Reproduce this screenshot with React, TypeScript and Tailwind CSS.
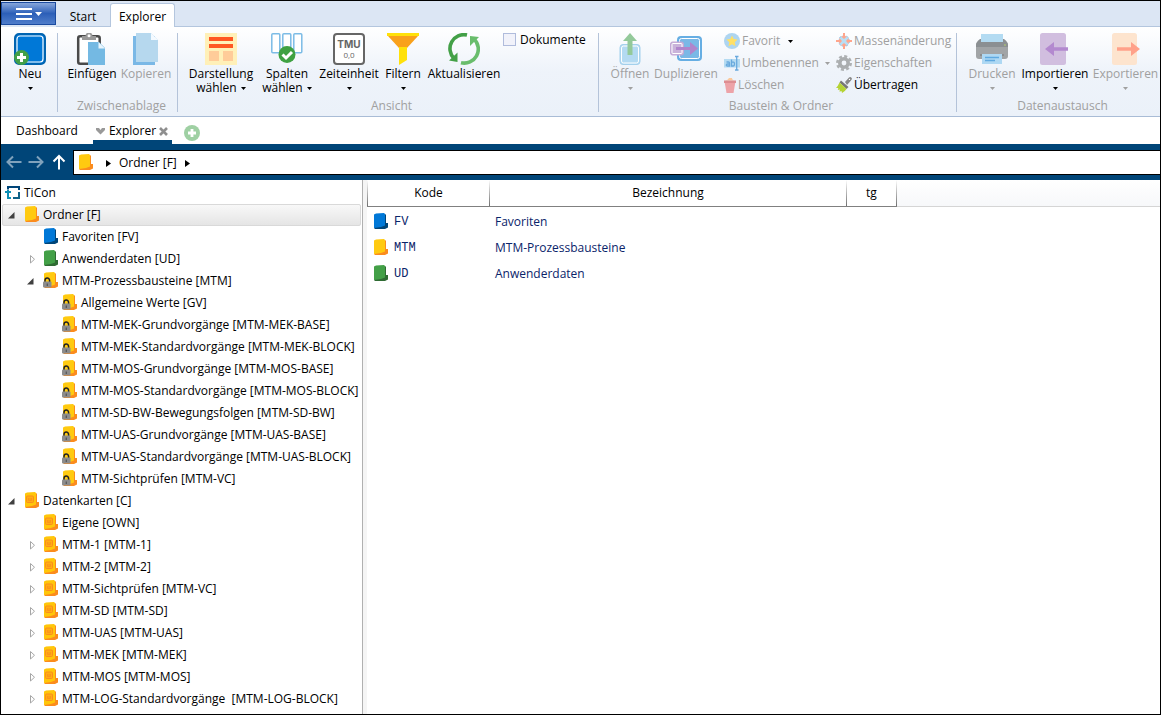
import { useState, type ReactNode } from "react";
import clsx from "clsx";

type FolderKind = "blue" | "green" | "yellow" | "locked" | "card";

type TreeNode = {
  label: string;
  icon: FolderKind;
  open?: boolean;
  expandable?: boolean;
  children?: TreeNode[];
};

const treeData: TreeNode[] = [
  {
    label: "Ordner [F]",
    icon: "yellow",
    open: true,
    expandable: true,
    children: [
      { label: "Favoriten [FV]", icon: "blue" },
      { label: "Anwenderdaten [UD]", icon: "green", expandable: true },
      {
        label: "MTM-Prozessbausteine [MTM]",
        icon: "locked",
        open: true,
        expandable: true,
        children: [
          { label: "Allgemeine Werte [GV]", icon: "locked" },
          { label: "MTM-MEK-Grundvorgänge [MTM-MEK-BASE]", icon: "locked" },
          { label: "MTM-MEK-Standardvorgänge [MTM-MEK-BLOCK]", icon: "locked" },
          { label: "MTM-MOS-Grundvorgänge [MTM-MOS-BASE]", icon: "locked" },
          { label: "MTM-MOS-Standardvorgänge [MTM-MOS-BLOCK]", icon: "locked" },
          { label: "MTM-SD-BW-Bewegungsfolgen [MTM-SD-BW]", icon: "locked" },
          { label: "MTM-UAS-Grundvorgänge [MTM-UAS-BASE]", icon: "locked" },
          { label: "MTM-UAS-Standardvorgänge [MTM-UAS-BLOCK]", icon: "locked" },
          { label: "MTM-Sichtprüfen [MTM-VC]", icon: "locked" },
        ],
      },
    ],
  },
  {
    label: "Datenkarten [C]",
    icon: "card",
    open: true,
    expandable: true,
    children: [
      { label: "Eigene [OWN]", icon: "card" },
      { label: "MTM-1 [MTM-1]", icon: "card", expandable: true },
      { label: "MTM-2 [MTM-2]", icon: "card", expandable: true },
      { label: "MTM-Sichtprüfen [MTM-VC]", icon: "card", expandable: true },
      { label: "MTM-SD [MTM-SD]", icon: "card", expandable: true },
      { label: "MTM-UAS [MTM-UAS]", icon: "card", expandable: true },
      { label: "MTM-MEK [MTM-MEK]", icon: "card", expandable: true },
      { label: "MTM-MOS [MTM-MOS]", icon: "card", expandable: true },
      { label: "MTM-LOG-Standardvorgänge  [MTM-LOG-BLOCK]", icon: "card", expandable: true },
    ],
  },
];

const rows: { code: string; name: string; icon: FolderKind }[] = [
  { code: "FV", name: "Favoriten", icon: "blue" },
  { code: "MTM", name: "MTM-Prozessbausteine", icon: "yellow" },
  { code: "UD", name: "Anwenderdaten", icon: "green" },
];

const folderColors = {
  blue: ["#0078d7", "#004578"],
  green: ["#43a047", "#2f6b33"],
  yellow: ["#ffca10", "#fb8c1e"],
  locked: ["#ffca10", "#fb8c1e"],
  card: ["#ffc60a", "#fb8c1e"],
};

function FolderIcon({ kind }: { kind: FolderKind }) {
  const [front, back] = folderColors[kind];
  return (
    <svg width="16" height="16" viewBox="0 0 16 16" className="mb-0.5 shrink-0">
      <path d="M10 1l3 .5V10h2v4.500L12 16H2l-1-1z" fill={back} />
      <path d="M1 1.500L3 .5 11 0l1 1v11.500L8 14l-7 1z" fill={front} />
      {kind === "card" && (
        <g fill="none" stroke="#fb8c1e">
          <rect x="2.500" y="4" width="7" height="6.500" rx="1" fill="#ffae12" />
          <path d="M4.500 6v2.500h3V6M6 6v2" strokeWidth=".8" />
        </g>
      )}
      {kind === "locked" && (
        <>
          <path d="M2 10V8.500a2.300 2.500 0 0 1 4.600 0V10" fill="none" stroke="#222" strokeWidth="1.500" />
          <rect x="0" y="9.500" width="8.500" height="6" rx="1" fill="#8c8c8c" />
          <rect x="3.700" y="11.500" width="1.200" height="2.500" fill="#555" />
        </>
      )}
    </svg>
  );
}

function Caret({ muted = false }: { muted?: boolean }) {
  return (
    <svg width="5" height="3" viewBox="0 0 5 3" className="inline-block shrink-0 align-middle">
      <path d="M0 0h5L2.500 3z" fill={muted ? "#a0a0a0" : "#000"} />
    </svg>
  );
}

function BigIcon({ children }: { children: ReactNode }) {
  return (
    <svg width="32" height="32" viewBox="0 0 32 32" className="mb-0.5">
      {children}
    </svg>
  );
}

const NewIcon = () => (
  <BigIcon>
    <rect x="1" y="1" width="30" height="30" rx="4" fill="#0078d7" stroke="#0064b1" strokeWidth="2" />
    <rect x="3" y="3" width="26" height="26" rx="3" fill="none" stroke="#fff" strokeWidth="1.200" />
    <circle cx="7.500" cy="24.500" r="7.500" fill="#43a047" />
    <path d="M7.500 20v9M3 24.500h9" stroke="#fff" strokeWidth="3" />
  </BigIcon>
);

const PasteIcon = () => (
  <BigIcon>
    <rect x="2.200" y="3.200" width="21.500" height="27.500" rx="2" fill="#fff" stroke="#4a4a4a" strokeWidth="2.500" />
    <path d="M6 3h3.500a3.500 3.500 0 0 1 7 0H20v4H6z" fill="#999" />
    <circle cx="13" cy="2.800" r="1.500" fill="#fff" />
    <path d="M12 9h11l6 6v17H12z" fill="#74b9e3" />
    <path d="M22.500 9l6.500 6.500h-6.500z" fill="#e8f5fd" />
  </BigIcon>
);

const CopyIcon = () => (
  <BigIcon>
    <path d="M3 3h22v29H3z" fill="#7ab8e6" />
    <path d="M6 0h15l7 7v22H6z" fill="#b6d8ee" />
    <path d="M21 0v7h7z" fill="#f4faff" />
  </BigIcon>
);

const LayoutIcon = () => (
  <BigIcon>
    <path d="M0 0h32v32H0z" fill="#fff0b8" />
    <path d="M4 4h24v4H4zM4 11h24v4H4z" fill="#ff5722" />
    <path d="M4 18h10v10H4zM18 18h10v10H18z" fill="#ffcc99" />
  </BigIcon>
);

const ColumnsIcon = () => (
  <BigIcon>
    <g fill="#fff" stroke="#7cbce6" strokeWidth="1.500">
      <rect x=".8" y=".8" width="8" height="19" rx="1" />
      <rect x="11.800" y=".8" width="8" height="19" rx="1" />
      <rect x="22.800" y=".8" width="8" height="19" rx="1" />
    </g>
    <circle cx="16" cy="21.500" r="8.500" fill="#3fa142" />
    <path d="M11.500 21.500l3.500 3.500 6-6" fill="none" stroke="#fff" strokeWidth="3" />
  </BigIcon>
);

const UnitIcon = () => (
  <span className="mb-0.5 flex h-8 w-8 flex-col items-center justify-between rounded-[4px] border-2 border-[#666] bg-white py-[3px] leading-none text-[#666]">
    <span className="font-['Inter',sans-serif] text-[10px] leading-[12px] font-bold">TMU</span>
    <span className="text-[8px] leading-[10px]">0,0</span>
  </span>
);

const FilterIcon = () => (
  <BigIcon>
    <path d="M0 0h32v3H0z" fill="#ffe10a" />
    <path d="M1 3h30L20 15h-8z" fill="#f9a11b" />
    <path d="M12 14h8v13l-8 5z" fill="#ffe10a" />
  </BigIcon>
);

const RefreshIcon = () => (
  <BigIcon>
    <path d="M19 2A14 14 0 0 0 6 25.500" fill="none" stroke="#43a047" strokeWidth="3.600" />
    <path d="M1 27.500L9.500 19.500V29z" fill="#43a047" />
    <path d="M13 29.700A14 14 0 0 0 26 6" fill="none" stroke="#69bd6c" strokeWidth="3.600" />
    <path d="M31 4L22 3v10z" fill="#69bd6c" />
  </BigIcon>
);

const OpenIcon = () => (
  <BigIcon>
    <rect x="6" y="11.500" width="20" height="20" rx="3" fill="#b3daf2" stroke="#a3d0ec" />
    <rect x="7.500" y="13" width="17" height="17" rx="2" fill="none" stroke="#fff" />
    <path d="M13.500 22V8H9l7-8 7 8h-4.500v14z" fill="#93c99a" />
  </BigIcon>
);

const DuplicateIcon = () => (
  <BigIcon>
    <rect x="8" y="4" width="23" height="23" rx="3" fill="#7ab8e6" stroke="#66aee3" strokeWidth="2" />
    <rect x="9.500" y="5.500" width="20" height="20" rx="2" fill="none" stroke="#fff" />
    <rect x=".5" y="9" width="13" height="13" rx="2" fill="#c9b3da" stroke="#c3a9d6" />
    <rect x="2" y="10.500" width="10" height="10" rx="1" fill="none" stroke="#fff" />
    <path d="M6 14h14V9l8 6.500-8 6.500v-5H6z" fill="#b085cc" />
  </BigIcon>
);

const PrintIcon = () => (
  <BigIcon>
    <rect x="0" y="9" width="32" height="17" rx="3" fill="#a1a4a6" />
    <path d="M0 14v-2q0-3 4-6h24q4 3 4 6v2z" fill="#8b8f92" />
    <path d="M5 1h22v8H5z" fill="#b3dbf2" />
    <path d="M4 22h24" stroke="#777" />
    <circle cx="29" cy="12" r=".8" fill="#b8d96a" />
    <path d="M6 21h20v10H6z" fill="#aed8f3" />
    <path d="M9 24.500h14M9 27.500h10" stroke="#5fa9e0" strokeWidth="1.300" />
  </BigIcon>
);

const ImportIcon = () => (
  <BigIcon>
    <rect x="1" y="0" width="26" height="32" rx="2.500" fill="#d1bedf" />
    <path d="M29 14.300H15V9l-9 7 9 7v-5.300h14z" fill="#b389cf" />
  </BigIcon>
);

const ExportIcon = () => (
  <BigIcon>
    <rect x="2" y="0" width="25" height="32" rx="2.500" fill="#fde4ce" />
    <path d="M7 14.300h14V9l9 7-9 7v-5.300H7z" fill="#ffa18a" />
  </BigIcon>
);

const FavoriteIcon = () => (
  <svg width="16" height="16" viewBox="0 0 16 16">
    <circle cx="8" cy="8" r="8" fill="#aed5f0" />
    <path d="M8 2.500l1.700 3.600 3.900.5-2.900 2.700.8 3.900L8 11.300l-3.500 1.900.8-3.900-2.900-2.700 3.900-.5z" fill="#ffe066" />
  </svg>
);

const RenameIcon = () => (
  <svg width="16" height="16" viewBox="0 0 16 16">
    <path d="M0 4h16v8.500H0z" fill="#b5dbf2" />
    <g fill="none" stroke="#69a9dd" strokeWidth="1.300">
      <path d="M2.500 7h2q1 0 1 1v3H3.500q-1.200 0-1.200-1t1.200-1h2M7.500 4.500V11h1.800q1.200 0 1.200-2T9.300 7.200H7.500" />
      <path d="M11 1.500h3.500M11 15h3.500M12.700 1.500V15" />
    </g>
  </svg>
);

const DeleteIcon = () => (
  <svg width="12" height="16" viewBox="0 0 12 16">
    <path d="M1 3.500Q4 3 5 1h3q0 2 3 2.500z" fill="#fbc99b" />
    <path d="M0 3.500h12V6H0z" fill="#dd8d92" />
    <path d="M.8 6h10.400L9.500 16h-7z" fill="#eda3a8" />
  </svg>
);

const MassIcon = () => (
  <svg width="16" height="16" viewBox="0 0 16 16">
    <circle cx="8" cy="8" r="5.500" fill="#b9def4" stroke="#8fc5e8" strokeDasharray="2 2" />
    <path
      d="M8 6L5 3.300h2V0h2v3.300h2zM8 10l3 2.700H9V16H7v-3.300H5zM6 8l-2.700 3V9H0V7h3.300V5zM10 8l2.700-3v2H16v2h-3.300v2z"
      fill="#ffa58c"
    />
  </svg>
);

const GearIcon = () => (
  <svg width="16" height="16" viewBox="0 0 16 16">
    <circle cx="8" cy="8" r="6.700" fill="none" stroke="#aeb1b3" strokeWidth="2.600" strokeDasharray="3 2.260" />
    <circle cx="8" cy="8" r="4.200" fill="none" stroke="#aaadaf" strokeWidth="3.600" />
  </svg>
);

const BrushIcon = () => (
  <svg width="16" height="16" viewBox="0 0 16 16">
    <path d="M9 5l4-4.500q1.500-1 2.500.3T15 3.500L11 8z" fill="#888" />
    <path d="M5 3.500L12.500 10l-2 2L3.500 5.500z" fill="#777" />
    <path d="M3.500 5.500l7 6.500Q9 14.500 6 16l-.5-2-2 .8.300-2.300-2 .5.500-2L0 11q2-2 3.500-5.500z" fill="#b5d334" />
    <circle cx="13.500" cy="2.400" r=".7" fill="#fff" />
  </svg>
);

type BigButtonProps = {
  icon: ReactNode;
  label: string;
  second?: string;
  menu?: boolean;
  disabled?: boolean;
  className: string;
};

function BigButton({ icon, label, second, menu, disabled, className }: BigButtonProps) {
  return (
    <button
      type="button"
      disabled={disabled}
      className={clsx(
        "flex shrink-0 flex-col items-center leading-[14px] whitespace-nowrap disabled:text-[#a0a0a0]",
        className
      )}
    >
      {icon}
      <span>{label}</span>
      {menu && (
        <span className="flex h-[14px] items-center gap-1">
          {second}
          <Caret muted={disabled} />
        </span>
      )}
    </button>
  );
}

type SmallButtonProps = {
  icon: ReactNode;
  label: string;
  disabled?: boolean;
  children?: ReactNode;
};

function SmallButton({ icon, label, disabled, children }: SmallButtonProps) {
  return (
    <button
      type="button"
      disabled={disabled}
      className="flex h-[22px] items-center gap-0.5 whitespace-nowrap disabled:text-[#a0a0a0]"
    >
      {icon}
      {label}
      {children}
    </button>
  );
}

function RibbonGroup({ title, className, children }: { title?: string; className: string; children: ReactNode }) {
  return (
    <section className={clsx("flex shrink-0 flex-col justify-between", className)}>
      <div className="flex h-[62px] items-start">{children}</div>
      <h2 className="pb-0.5 text-center leading-4 text-[#a0a0a0]">{title}</h2>
    </section>
  );
}

const Separator = () => <div className="mb-1 w-px shrink-0 bg-[#b4c3d9]" />;

function Ribbon() {
  return (
    <div className="flex h-[90px] border-b border-[#a9bcd6] bg-linear-to-b from-white via-[#eef3fa] to-[#ebf1f9] pt-1.5">
      <RibbonGroup className="w-14 pl-0.5">
        <BigButton icon={<NewIcon />} label="Neu" menu className="w-[54px]" />
      </RibbonGroup>
      <Separator />
      <RibbonGroup title="Zwischenablage" className="w-[119px] pl-2">
        <BigButton icon={<PasteIcon />} label="Einfügen" className="w-[52px]" />
        <BigButton icon={<CopyIcon />} label="Kopieren" disabled className="w-14" />
      </RibbonGroup>
      <Separator />
      <RibbonGroup title="Ansicht" className="w-[420px] pl-[7px]">
        <BigButton icon={<LayoutIcon />} label="Darstellung" second="wählen" menu className="w-[72px]" />
        <BigButton icon={<ColumnsIcon />} label="Spalten" second="wählen" menu className="w-[60px]" />
        <BigButton icon={<UnitIcon />} label="Zeiteinheit" menu className="w-[64px]" />
        <BigButton icon={<FilterIcon />} label="Filtern" menu className="w-[44px]" />
        <BigButton icon={<RefreshIcon />} label="Aktualisieren" className="w-[78px]" />
        <label className="flex items-center gap-1 leading-[13px]">
          <input
            type="checkbox"
            className="h-[13px] w-[13px] appearance-none border border-[#b0bcdc] bg-[#f1f2fa] checked:bg-[#0078d7]"
          />
          Dokumente
        </label>
      </RibbonGroup>
      <Separator />
      <RibbonGroup title="Baustein &amp; Ordner" className="w-[357px] pl-[7px]">
        <BigButton icon={<OpenIcon />} label="Öffnen" menu disabled className="w-12" />
        <BigButton icon={<DuplicateIcon />} label="Duplizieren" disabled className="w-16" />
        <div className="-mt-[3px] flex w-[118px] flex-col pl-1.5">
          <SmallButton icon={<FavoriteIcon />} label="Favorit" disabled>
            <span className="flex pl-1.5">
              <Caret />
            </span>
          </SmallButton>
          <SmallButton icon={<RenameIcon />} label="Umbenennen" disabled>
            <span className="flex pl-1">
              <Caret muted />
            </span>
          </SmallButton>
          <SmallButton icon={<DeleteIcon />} label="Löschen" disabled />
        </div>
        <div className="-mt-[3px] flex flex-col">
          <SmallButton icon={<MassIcon />} label="Massenänderung" disabled />
          <SmallButton icon={<GearIcon />} label="Eigenschaften" disabled />
          <SmallButton icon={<BrushIcon />} label="Übertragen" />
        </div>
      </RibbonGroup>
      <Separator />
      <RibbonGroup title="Datenaustausch" className="w-[203px] pl-2">
        <BigButton icon={<PrintIcon />} label="Drucken" menu disabled className="w-[54px]" />
        <BigButton icon={<ImportIcon />} label="Importieren" menu className="w-[72px]" />
        <BigButton icon={<ExportIcon />} label="Exportieren" menu disabled className="w-[69px]" />
      </RibbonGroup>
    </div>
  );
}

function RibbonTabs() {
  return (
    <div className="flex h-[26px] items-stretch bg-[#dce6f4]">
      <button
        type="button"
        aria-label="Datei"
        className="mt-px mb-0.5 flex w-[55px] items-center justify-center gap-[3px] border border-[#1b4ba0] bg-linear-to-b from-[#86a5da] via-[#2c5fb8] to-[#4f7dca]"
      >
        <svg width="16" height="12" viewBox="0 0 16 12">
          <path d="M0 1h16M0 6h16M0 11h16" stroke="#fff" strokeWidth="2" />
        </svg>
        <svg width="7" height="4" viewBox="0 0 7 4">
          <path d="M0 0h7L3.500 4z" fill="#fff" />
        </svg>
      </button>
      <nav className="flex flex-1">
        <button type="button" className="w-[54px] border-b border-[#b4c6de] pt-1.5">
          Start
        </button>
        <button
          type="button"
          className="mt-0.5 w-[65px] rounded-t-[3px] border border-b-0 border-[#b4c6de] bg-white pt-[3px]"
        >
          Explorer
        </button>
        <span className="flex-1 border-b border-[#b4c6de]" />
      </nav>
    </div>
  );
}

function DocumentTabs() {
  return (
    <nav className="flex h-[27px] items-stretch">
      <button type="button" className="w-[92px] leading-7">
        Dashboard
      </button>
      <div className="flex w-[79px] items-center justify-between border-b-4 border-[#004578] pt-[5px] pr-1 pl-0.5">
        <svg width="11" height="8" viewBox="0 0 11 8">
          <path d="M1 1h3l1.500 2L7 1h3v2L5.500 7.500 1 3z" fill="#999" />
        </svg>
        <button type="button" className="leading-4">
          Explorer
        </button>
        <button type="button" aria-label="Tab schließen">
          <svg width="9" height="9" viewBox="0 0 9 9">
            <path d="M1 1l7 7M8 1L1 8" stroke="#8f8f8f" strokeWidth="2.600" />
          </svg>
        </button>
      </div>
      <button type="button" aria-label="Neuer Tab" className="pt-[5px] pl-3">
        <svg width="16" height="16" viewBox="0 0 16 16">
          <circle cx="8" cy="8" r="8" fill="#9fd0a3" />
          <path d="M8 4v8M4 8h8" stroke="#fff" strokeWidth="2.800" />
        </svg>
      </button>
    </nav>
  );
}

function NavArrow({ label, path, dim }: { label: string; path: string; dim?: boolean }) {
  return (
    <button type="button" aria-label={label} className={dim ? "opacity-50" : ""}>
      <svg width="16" height="16" viewBox="0 0 16 16" fill="none" stroke="#fff" strokeWidth="2">
        <path d={path} />
      </svg>
    </button>
  );
}

const CrumbArrow = () => (
  <svg width="5" height="7" viewBox="0 0 5 7">
    <path d="M0 0l5 3.500L0 7z" fill="#000" />
  </svg>
);

function AddressBar() {
  return (
    <div className="flex h-9 items-center bg-[#004578] pl-[5px]">
      <div className="flex w-[67px] shrink-0 items-center">
        <NavArrow label="Zurück" path="M15.500 8H2M7 2.500L1.500 8 7 13.500" dim />
        <span className="w-[6px]" />
        <NavArrow label="Vor" path="M.5 8H14M9 2.500L14.500 8 9 13.500" dim />
        <span className="w-[7px]" />
        <NavArrow label="Nach oben" path="M8 15.500V2M2.500 7.500L8 2l5.500 5.500" />
      </div>
      <div className="flex h-[25px] flex-1 items-center border border-r-0 border-black bg-white pt-0.5 pl-1">
        <FolderIcon kind="yellow" />
        <span className="w-3" />
        <CrumbArrow />
        <button type="button" className="px-2">
          Ordner [F]
        </button>
        <CrumbArrow />
      </div>
    </div>
  );
}

type TreeItemProps = {
  node: TreeNode;
  level: number;
  selected: string;
  onSelect: (label: string) => void;
};

const levelPadding = ["pl-[2px]", "pl-[21px]", "pl-[40px]"];

function TreeItem({ node, level, selected, onSelect }: TreeItemProps) {
  const [open, setOpen] = useState(Boolean(node.open));
  const isSelected = selected === node.label;

  return (
    <li role="treeitem" aria-expanded={node.expandable ? open : undefined} aria-selected={isSelected}>
      <div
        className={clsx(
          "flex h-[22px] items-center rounded-[2px] border whitespace-pre",
          levelPadding[level],
          isSelected ? "border-[#d9d9d9] bg-linear-to-b from-[#f8f8f8] to-[#e5e5e5]" : "border-transparent"
        )}
      >
        <span className="flex w-[19px] shrink-0">
          {node.expandable && (
            <button type="button" aria-label="Auf- oder zuklappen" onClick={() => setOpen(!open)} className="pl-0.5">
              <svg width="10" height="9" viewBox="0 0 10 9">
                {open ? (
                  <path d="M7.500 1v6.500H1z" fill="#404040" />
                ) : (
                  <path d="M4.500 .5v7.500l4-3.750z" fill="#fff" stroke="#a6a6a6" />
                )}
              </svg>
            </button>
          )}
        </span>
        <button type="button" onClick={() => onSelect(node.label)} className="flex items-center gap-[3px]">
          <FolderIcon kind={node.icon} />
          {node.label}
        </button>
      </div>
      {open && node.children && (
        <ul role="group">
          {node.children.map((child) => (
            <TreeItem key={child.label} node={child} level={level + 1} selected={selected} onSelect={onSelect} />
          ))}
        </ul>
      )}
    </li>
  );
}

function FolderTree() {
  const [selected, setSelected] = useState("Ordner [F]");

  return (
    <aside className="w-[362px] shrink-0 border-r border-[#b0b0b0] px-px pt-0.5">
      <div className="flex h-[22px] items-center gap-[3px] pl-[3px]">
        <svg width="16" height="16" viewBox="0 0 16 16" fill="none" strokeWidth="2">
          <path d="M3 4.500V2h11v3" stroke="#004578" />
          <path d="M0 7h6M3 5v8h3" stroke="#0d8fb5" />
          <path d="M8 13h6V7" stroke="#0f6288" />
        </svg>
        TiCon
      </div>
      <ul role="tree" aria-label="Ordnerstruktur">
        {treeData.map((node) => (
          <TreeItem key={node.label} node={node} level={0} selected={selected} onSelect={setSelected} />
        ))}
      </ul>
    </aside>
  );
}

const headCell = "border-b border-[#808080] p-0 font-normal";

function HeadDivider() {
  return <span className="w-px self-stretch bg-linear-to-b from-white to-[#707070]" />;
}

function ContentTable() {
  return (
    <main className="min-w-0 flex-1 border-l-4 border-[#f5f5f5]">
      <table className="w-full table-fixed border-collapse">
        <thead>
          <tr>
            <th className={clsx(headCell, "w-[123px]")}>
              <div className="flex h-[26px] items-center justify-between">
                <HeadDivider />
                Kode
                <HeadDivider />
              </div>
            </th>
            <th className={clsx(headCell, "w-[357px]")}>
              <div className="flex h-[26px] items-center">
                <span className="flex-1">Bezeichnung</span>
                <HeadDivider />
              </div>
            </th>
            <th className={clsx(headCell, "w-[50px]")}>
              <div className="flex h-[26px] items-center">
                <span className="flex-1">tg</span>
                <HeadDivider />
              </div>
            </th>
            <th className="border-b border-[#d5d5d5] bg-linear-to-b from-white to-[#f7f8fa] p-0" />
          </tr>
        </thead>
        <tbody className="text-[#0a246a]">
          <tr className="h-0.5" />
          {rows.map((row) => (
            <tr key={row.code} className="h-[26px]">
              <td className="p-0 pl-1.5">
                <span className="flex items-center gap-[5px] font-['Liberation_Mono',monospace]">
                  <FolderIcon kind={row.icon} />
                  {row.code}
                </span>
              </td>
              <td className="p-0 pl-[5px]">{row.name}</td>
              <td />
              <td />
            </tr>
          ))}
        </tbody>
      </table>
    </main>
  );
}

export default function App() {
  return (
    <div className="flex min-h-screen flex-col overflow-hidden border border-black bg-white font-['Open_Sans','Noto_Sans',sans-serif] text-[12px] text-black">
      <header>
        <RibbonTabs />
        <Ribbon />
      </header>
      <DocumentTabs />
      <AddressBar />
      <div className="flex flex-1">
        <FolderTree />
        <ContentTable />
      </div>
    </div>
  );
}
